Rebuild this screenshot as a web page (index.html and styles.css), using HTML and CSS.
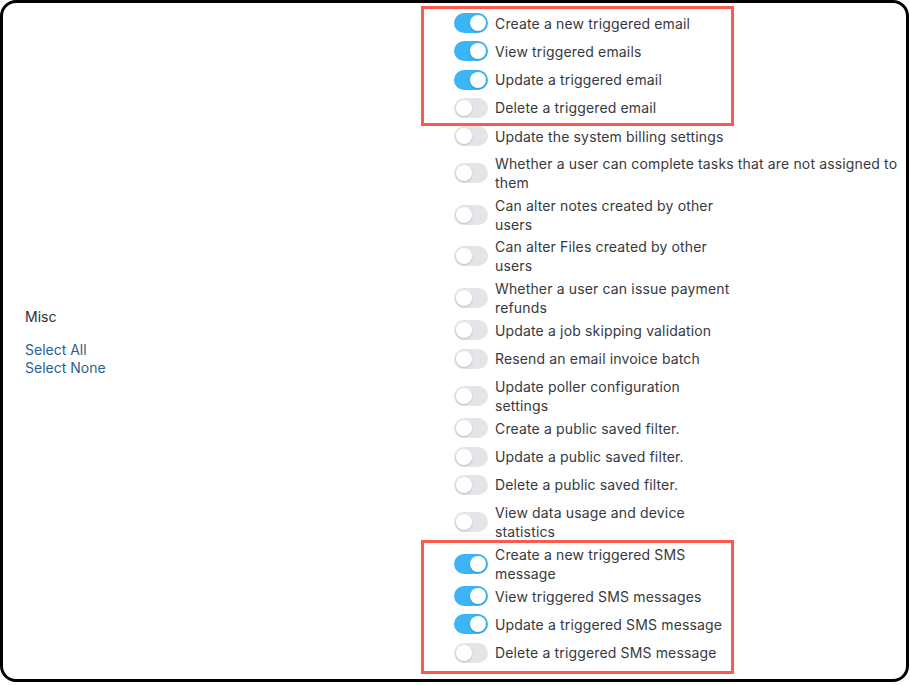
FILE: index.html
```html
<!DOCTYPE html>
<html lang="en">
<head>
<meta charset="utf-8">
<title>Permissions - Misc</title>
<link rel="stylesheet" href="styles.css">
</head>
<body>
<div class="frame">
  <div class="group-name">
    <div class="group-title">Misc</div>
    <a class="link" href="#">Select All</a>
    <a class="link" href="#">Select None</a>
  </div>
  <div class="perm-list">
    <div class="row"><span class="toggle on"></span><span class="label">Create a new triggered email</span></div>
    <div class="row"><span class="toggle on"></span><span class="label">View triggered emails</span></div>
    <div class="row"><span class="toggle on"></span><span class="label">Update a triggered email</span></div>
    <div class="row"><span class="toggle"></span><span class="label">Delete a triggered email</span></div>
    <div class="row"><span class="toggle"></span><span class="label">Update the system billing settings</span></div>
    <div class="row two"><span class="toggle"></span><span class="label wide">Whether a user can complete tasks that are not assigned to them</span></div>
    <div class="row two"><span class="toggle"></span><span class="label">Can alter notes created by other users</span></div>
    <div class="row two"><span class="toggle"></span><span class="label">Can alter Files created by other users</span></div>
    <div class="row two"><span class="toggle"></span><span class="label">Whether a user can issue payment refunds</span></div>
    <div class="row"><span class="toggle"></span><span class="label">Update a job skipping validation</span></div>
    <div class="row"><span class="toggle"></span><span class="label">Resend an email invoice batch</span></div>
    <div class="row two"><span class="toggle"></span><span class="label">Update poller configuration settings</span></div>
    <div class="row"><span class="toggle"></span><span class="label">Create a public saved filter.</span></div>
    <div class="row"><span class="toggle"></span><span class="label">Update a public saved filter.</span></div>
    <div class="row"><span class="toggle"></span><span class="label">Delete a public saved filter.</span></div>
    <div class="row two"><span class="toggle"></span><span class="label">View data usage and device statistics</span></div>
    <div class="row two"><span class="toggle on"></span><span class="label">Create a new triggered SMS message</span></div>
    <div class="row"><span class="toggle on"></span><span class="label">View triggered SMS messages</span></div>
    <div class="row"><span class="toggle on"></span><span class="label">Update a triggered SMS message</span></div>
    <div class="row"><span class="toggle"></span><span class="label">Delete a triggered SMS message</span></div>
  </div>
  <div class="highlight hl-email"></div>
  <div class="highlight hl-sms"></div>
</div>
</body>
</html>
```
FILE: styles.css
```css
* { box-sizing: border-box; }

html, body {
  margin: 0;
  padding: 0;
  background: #ffffff;
}

.frame {
  position: relative;
  width: 909px;
  height: 682px;
  border: 3px solid #000;
  border-radius: 16px;
  background: #fff;
  display: flex;
  align-items: flex-start;
  overflow: hidden;
}

.group-name {
  flex: 0 0 451px;
  align-self: center;
  padding-left: 22px;
  padding-top: 3px;
  display: flex;
  flex-direction: column;
  font-family: Inter, "Liberation Sans", sans-serif;
  font-size: 14px;
  line-height: 18px;
}

.group-title {
  color: #2d2f33;
  margin-bottom: 15px;
}

.link {
  color: #2a5f8e;
  text-decoration: none;
  align-self: flex-start;
}

.perm-list {
  flex: 1;
  padding-top: 6.5px;
  display: flex;
  flex-direction: column;
  font-family: Inter, "Liberation Sans", sans-serif;
  font-size: 14px;
  letter-spacing: 0.15px;
  color: #363941;
}

.row {
  display: flex;
  align-items: center;
  gap: 7px;
  padding-top: 3.5px;
  padding-bottom: 4.75px;
}

.row.two {
  padding-bottom: 0;
}

.label {
  line-height: 19px;
  max-width: 238px;
}

.label.wide {
  max-width: 410px;
}

.toggle {
  position: relative;
  flex: 0 0 34px;
  width: 34px;
  height: 20px;
  border-radius: 10px;
  background: #e3e5e9;
}

.toggle::after {
  content: "";
  position: absolute;
  top: 2px;
  left: 2px;
  width: 16px;
  height: 16px;
  border-radius: 50%;
  background: #fff;
  box-shadow: 0 1px 2px rgba(0, 0, 0, 0.18);
}

.toggle.on {
  background: #3bb5f6;
}

.toggle.on::after {
  left: 16px;
}

.highlight {
  position: absolute;
  left: 418px;
  width: 313px;
  border: 3px solid #fa5a4f;
  pointer-events: none;
}

.hl-email {
  top: 3px;
  height: 120px;
}

.hl-sms {
  top: 537px;
  height: 134px;
}
```
